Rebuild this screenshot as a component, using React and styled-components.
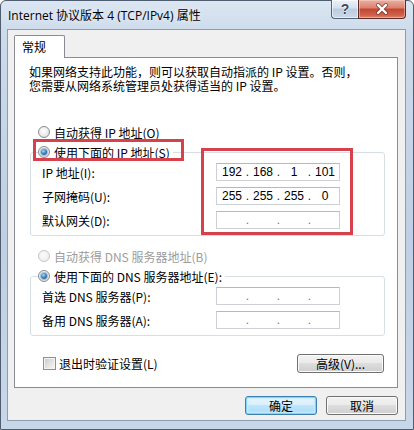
import React from 'react';
import styled, { createGlobalStyle } from 'styled-components';

const Global = createGlobalStyle`
  html, body { margin: 0; padding: 0; background: #fff; }
  body {
    width: 414px; height: 430px; overflow: hidden;
    font-family: "Noto Sans CJK SC", "Noto Sans", sans-serif;
    font-size: 12px; color: #000;
  }
  * { box-sizing: border-box; }
`;

const Window = styled.div`
  width: 414px;
  height: 430px;
  display: flex;
  flex-direction: column;
  background: linear-gradient(180deg, #dbe6f2 0%, #ccdaea 8%, #bfd0e4 55%, #c8d7e8 100%);
  border: 1px solid #4e5d70;
  border-radius: 6px 6px 0 0;
  padding: 0 7px 8px 6px;
`;

const TitleBar = styled.div`
  height: 28px;
  display: flex;
  justify-content: space-between;
  align-items: center;
`;

const Title = styled.div`
  padding-left: 1px;
  font-family: "Open Sans", "Noto Sans CJK SC", sans-serif;
  font-size: 12px;
  color: #000;
  text-shadow: 0 0 6px rgba(255, 255, 255, 0.9);
`;

const CaptionButtons = styled.div`
  display: flex;
  align-self: flex-start;
  margin-top: -1px;
`;

const HelpButton = styled.div`
  width: 27px;
  height: 19px;
  border: 1px solid #53657d;
  border-top: none;
  border-right: none;
  border-radius: 0 0 0 4px;
  background: linear-gradient(180deg, #eaf1f8 0%, #d6e1ee 45%, #bccbdf 50%, #cbd9e9 100%);
  box-shadow: inset 0 0 0 1px rgba(255, 255, 255, 0.55);
  display: flex;
  align-items: center;
  justify-content: center;
  font-family: "Liberation Sans", Arial, sans-serif;
  font-weight: bold;
  font-size: 14px;
  color: #3c4a5b;
  text-shadow: 0 0 1px #fff, 0 0 2px #fff;
`;

const CloseButton = styled.div`
  width: 48px;
  height: 19px;
  border: 1px solid #5b2c25;
  border-top: none;
  border-radius: 0 0 4px 0;
  background: linear-gradient(180deg, #eab0a3 0%, #d9806d 45%, #c3452f 50%, #d1624c 85%, #e08a6f 100%);
  box-shadow: inset 0 0 0 1px rgba(255, 220, 210, 0.45);
  display: flex;
  align-items: center;
  justify-content: center;
`;

const Client = styled.div`
  flex: 1;
  display: flex;
  flex-direction: column;
  background: #f0f0f0;
  border: 1px solid #8c9db2;
  padding: 5px 7px 5px 6px;
`;

const TabStrip = styled.div`
  display: flex;
`;

const Tab = styled.div`
  position: relative;
  z-index: 2;
  width: 51px;
  height: 23px;
  margin-bottom: -1px;
  padding-left: 7px;
  border: 1px solid #898c95;
  border-bottom: none;
  border-radius: 2px 2px 0 0;
  background: #fff;
  line-height: 21px;
  font-size: 12px;
`;

const Panel = styled.div`
  position: relative;
  height: 331px;
  border: 1px solid #898c95;
  background: #fff;
  display: flex;
  flex-direction: column;
`;

const Description = styled.div`
  margin: 7px 0 0 14px;
  line-height: 14px;
  font-size: 12px;
`;

const OptionRow = styled.div`
  display: flex;
  align-items: center;
  gap: 4px;
  height: 16px;
  margin: ${p => p.$top}px 0 0 23px;
  color: ${p => (p.$disabled ? '#9c9c9c' : '#000')};
`;

const Radio = styled.span`
  width: 12px;
  height: 12px;
  border-radius: 50%;
  flex: none;
  border: 1px solid ${p => (p.$disabled ? '#c6c6c6' : '#8b8c8d')};
  background: ${p =>
    p.$disabled
      ? 'radial-gradient(circle at 45% 40%, #fbfbfb 0%, #efefef 70%, #e4e4e4 100%)'
      : 'radial-gradient(circle at 45% 40%, #ffffff 0%, #e9e9e9 60%, #cfd0d1 100%)'};
  display: flex;
  align-items: center;
  justify-content: center;
  &::after {
    content: '';
    display: ${p => (p.$checked ? 'block' : 'none')};
    width: 6px;
    height: 6px;
    border-radius: 50%;
    background: radial-gradient(circle at 40% 35%, #a9dcf7 0%, #3f86c2 45%, #174f86 100%);
    box-shadow: 0 0 0 1px rgba(40, 100, 160, 0.35);
  }
`;

const Group = styled.fieldset`
  margin: 4px 0 0 15px;
  width: 355px;
  padding: 0;
  min-width: 0;
  border: 1px solid #d5dfe5;
  border-radius: 3px;
`;

const Legend = styled.legend`
  display: flex;
  align-items: center;
  gap: 4px;
  height: 16px;
  margin-left: 7px;
  padding: 0 3px 0 0;
`;

const Rows = styled.div`
  display: grid;
  grid-template-columns: 174px 124px;
  row-gap: 6px;
  padding: 3px 0 6px 11px;
`;

const RowLabel = styled.div`
  height: 18px;
  display: flex;
  align-items: center;
`;

const IpField = styled.div`
  width: 124px;
  height: 18px;
  border: 1px solid #cdd0d4;
  border-top-color: #b5b8bd;
  background: #fff;
  display: flex;
  align-items: center;
  padding-left: 2px;
  font-family: "Liberation Sans", Arial, sans-serif;
  font-size: 12px;
  line-height: 16px;
`;

const Octet = styled.span`
  width: 26px;
  text-align: center;
`;

const Dot = styled.span`
  width: 5px;
  text-align: center;
  color: ${p => (p.$empty ? '#777' : '#222')};
`;

const BottomRow = styled.div`
  display: flex;
  align-items: center;
  justify-content: space-between;
  height: 19px;
  margin: 18px 13px 0 28px;
`;

const CheckLabel = styled.label`
  display: flex;
  align-items: center;
  gap: 3px;
`;

const Checkbox = styled.span`
  width: 13px;
  height: 13px;
  border: 1px solid #8e8f8f;
  background: linear-gradient(135deg, #c9c9c9 0%, #e6e6e6 60%, #f6f6f6 100%);
  box-shadow: inset 0 0 0 1px #f4f4f4;
`;

const Button = styled.button`
  width: ${p => p.$w}px;
  height: 19px;
  padding: 0;
  font-family: "Noto Sans CJK SC", sans-serif;
  font-size: 12px;
  line-height: 17px;
  color: #000;
  border: 1px solid ${p => (p.$default ? '#3c7fb1' : '#707070')};
  border-radius: 3px;
  background: ${p =>
    p.$default
      ? 'linear-gradient(180deg, #eaf6fd 0%, #d9f0fc 45%, #bee6fd 50%, #a7d9f5 100%)'
      : 'linear-gradient(180deg, #f2f2f2 0%, #ebebeb 45%, #dddddd 50%, #cfcfcf 100%)'};
  box-shadow: ${p =>
    p.$default
      ? 'inset 0 0 0 1px #7fd6f7, inset 0 0 2px 2px #c6edfc'
      : 'inset 0 0 0 1px #fbfbfb'};
`;

const ButtonBar = styled.div`
  display: flex;
  justify-content: flex-end;
  gap: 9px;
  margin-top: 8px;
`;

const Mark = styled.div`
  position: absolute;
  left: ${p => p.$x}px;
  top: ${p => p.$y}px;
  width: ${p => p.$w}px;
  height: ${p => p.$h}px;
  border: 3px solid #d7414b;
  pointer-events: none;
`;

function Ip({ value }) {
  const parts = value ? value.split('.') : ['', '', '', ''];
  const empty = !value;
  const out = [];
  parts.forEach((p, i) => {
    if (i > 0) out.push(<Dot key={'d' + i} $empty={empty}>.</Dot>);
    out.push(<Octet key={'o' + i}>{p}</Octet>);
  });
  return <IpField>{out}</IpField>;
}

function CloseGlyph() {
  return (
    <svg width="14" height="12" viewBox="0 0 14 12">
      <path d="M3 2 L11 10 M11 2 L3 10" stroke="#5a2a22" strokeWidth="4" strokeLinecap="round" opacity="0.6" />
      <path d="M3 2 L11 10 M11 2 L3 10" stroke="#ffffff" strokeWidth="2.4" strokeLinecap="round" />
    </svg>
  );
}

export default function App() {
  return (
    <>
      <Global />
      <Window>
        <TitleBar>
          <Title>Internet 协议版本 4 (TCP/IPv4) 属性</Title>
          <CaptionButtons>
            <HelpButton>?</HelpButton>
            <CloseButton>
              <CloseGlyph />
            </CloseButton>
          </CaptionButtons>
        </TitleBar>
        <Client>
          <TabStrip>
            <Tab>常规</Tab>
          </TabStrip>
          <Panel>
            <Description>
              如果网络支持此功能，则可以获取自动指派的 IP 设置。否则，
              <br />
              您需要从网络系统管理员处获得适当的 IP 设置。
            </Description>

            <OptionRow $top={31}>
              <Radio />
              <span>自动获得 IP 地址(O)</span>
            </OptionRow>

            <Group>
              <Legend>
                <Radio $checked />
                <span>使用下面的 IP 地址(S)</span>
              </Legend>
              <Rows>
                <RowLabel>IP 地址(I):</RowLabel>
                <Ip value="192.168.1.101" />
                <RowLabel>子网掩码(U):</RowLabel>
                <Ip value="255.255.255.0" />
                <RowLabel>默认网关(D):</RowLabel>
                <Ip value="" />
              </Rows>
            </Group>

            <OptionRow $top={12} $disabled>
              <Radio $disabled />
              <span>自动获得 DNS 服务器地址(B)</span>
            </OptionRow>

            <Group>
              <Legend>
                <Radio $checked />
                <span>使用下面的 DNS 服务器地址(E):</span>
              </Legend>
              <Rows>
                <RowLabel>首选 DNS 服务器(P):</RowLabel>
                <Ip value="" />
                <RowLabel>备用 DNS 服务器(A):</RowLabel>
                <Ip value="" />
              </Rows>
            </Group>

            <BottomRow>
              <CheckLabel>
                <Checkbox />
                <span>退出时验证设置(L)</span>
              </CheckLabel>
              <Button $w={87}>高级(V)...</Button>
            </BottomRow>

            <Mark $x={18} $y={81} $w={151} $h={22} />
            <Mark $x={186} $y={90} $w={152} $h={87} />
          </Panel>
          <ButtonBar>
            <Button $w={72} $default>确定</Button>
            <Button $w={72}>取消</Button>
          </ButtonBar>
        </Client>
      </Window>
    </>
  );
}
